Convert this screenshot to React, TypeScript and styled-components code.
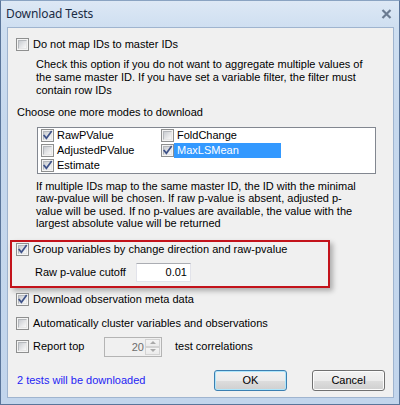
import React from 'react';
import styled, { createGlobalStyle } from 'styled-components';

const GlobalStyle = createGlobalStyle`
  html, body { margin: 0; padding: 0; background: #ffffff; }
  body { font-family: "Liberation Sans", Arial, sans-serif; font-size: 11px; color: #000; }
  * { box-sizing: border-box; }
`;

const Window = styled.div`
  width: 400px;
  height: 405px;
  border: 1px solid #5a759a;
  border-top-color: #8aa3c2;
  background: linear-gradient(to bottom, #dde8f5 0px, #cfdff1 26px, #c6d8ed 120px, #c2d5ec 100%);
  display: flex;
  flex-direction: column;
`;

const TitleBar = styled.div`
  height: 26px;
  flex: none;
  display: flex;
  align-items: center;
  justify-content: space-between;
  padding: 0 7px 1px 5px;
`;

const Title = styled.span`
  font-family: "Noto Sans", "Open Sans", sans-serif;
  font-size: 12px;
  color: #1b2c44;
  letter-spacing: -0.1px;
`;

const Body = styled.div`
  flex: 1;
  display: flex;
  padding: 0 5px 6px 6px;
`;

const Client = styled.div`
  flex: 1;
  background: #f0f0f0;
  border: 1px solid #9fb4cf;
  display: flex;
  flex-direction: column;
  align-items: flex-start;
`;

const Row = styled.div<{ $mt: number; $ml: number; $h?: number }>`
  display: flex;
  align-items: center;
  height: ${p => p.$h ?? 13}px;
  margin-top: ${p => p.$mt}px;
  margin-left: ${p => p.$ml}px;
  white-space: nowrap;
  line-height: 13px;
`;

const Label = styled.span<{ $gap?: number; $w?: number }>`
  margin-left: ${p => p.$gap ?? 4}px;
  ${p => (p.$w ? `width: ${p.$w}px;` : '')}
`;

const BoxOuter = styled.span`
  width: 13px;
  height: 13px;
  flex: none;
  border: 1px solid #8e8f8f;
  background: #f4f4f4;
  padding: 1px;
  display: flex;
`;

const BoxInner = styled.span`
  flex: 1;
  position: relative;
  background: linear-gradient(135deg, #c9ccd1 0%, #e4e5e7 55%, #f9f9f9 100%);
  border: 1px solid #b5b8bc;
  border-right-color: #e6e6e6;
  border-bottom-color: #e6e6e6;
  overflow: visible;
`;

const CheckSvg = styled.svg`
  position: absolute;
  left: -2px;
  top: -2px;
  width: 11px;
  height: 11px;
`;

const Checkbox: React.FC<{ checked?: boolean }> = ({ checked }) => (
  <BoxOuter>
    <BoxInner>
      {checked && (
        <CheckSvg viewBox="0 0 11 11">
          <path d="M2.2 5.6 L4.4 8.3 L9.2 1.8" fill="none" stroke="#3e5289" strokeWidth="1.7" strokeLinecap="square" strokeLinejoin="miter" />
        </CheckSvg>
      )}
    </BoxInner>
  </BoxOuter>
);

const Para = styled.p<{ $mt: number; $ml: number; $lh: number }>`
  margin: ${p => p.$mt}px 0 0 ${p => p.$ml}px;
  line-height: ${p => p.$lh}px;
  white-space: nowrap;
`;

const ListBox = styled.div`
  margin: 8px 0 0 29px;
  width: 339px;
  height: 47px;
  border: 1px solid #828790;
  background: #ffffff;
  padding-left: 3px;
  display: grid;
  grid-template-columns: 120px 120px;
  grid-template-rows: repeat(3, 15px);
  grid-auto-flow: column;
`;

const ListItem = styled.div`
  display: flex;
  align-items: center;
  height: 15px;
`;

const ItemText = styled.span<{ $selected?: boolean }>`
  flex: 1;
  height: 15px;
  line-height: 15px;
  padding-left: 3px;
  white-space: nowrap;
  background: ${p => (p.$selected ? '#3399ff' : 'transparent')};
  color: ${p => (p.$selected ? '#ffffff' : '#000000')};
`;

const GroupBox = styled.div`
  margin: 10px 0 0 2px;
  width: 320px;
  height: 48px;
  border: 2px solid #c3131b;
  box-shadow: 3px 3px 5px rgba(0, 0, 0, 0.28);
  display: flex;
  flex-direction: column;
  align-items: flex-start;
`;

const TextBox = styled.div`
  width: 55px;
  height: 19px;
  background: #ffffff;
  border: 1px solid #e2e3ea;
  border-top-color: #abadb3;
  text-align: right;
  padding-right: 3px;
  line-height: 17px;
`;

const Spinner = styled.div`
  margin-left: 20px;
  width: 58px;
  height: 20px;
  border: 1px solid #b4b4b4;
  background: #f0f0f0;
  display: flex;
  padding: 1px;
`;

const SpinValue = styled.span`
  flex: 1;
  text-align: right;
  color: #6d6d6d;
  line-height: 16px;
  padding-right: 1px;
`;

const SpinButtons = styled.div`
  width: 15px;
  display: flex;
  flex-direction: column;
  gap: 0px;
`;

const SpinButton = styled.div`
  flex: 1;
  border: 1px solid #d3d3d3;
  background: linear-gradient(#f4f4f4, #ebebeb);
  display: flex;
  align-items: center;
  justify-content: center;
`;

const Arrow = styled.span<{ $up?: boolean }>`
  width: 0;
  height: 0;
  border-left: 3px solid transparent;
  border-right: 3px solid transparent;
  ${p => (p.$up ? 'border-bottom: 3px solid #a9a9a9;' : 'border-top: 3px solid #a9a9a9;')}
`;

const Footer = styled.div`
  margin-top: 13px;
  align-self: stretch;
  display: flex;
  align-items: center;
  padding: 0 8px 0 9px;
  gap: 25px;
`;

const Status = styled.span`
  flex: 1;
  color: #2424f4;
  line-height: 13px;
`;

const Button = styled.button<{ $default?: boolean }>`
  width: 73px;
  height: 21px;
  padding: 0;
  font-family: "Liberation Sans", Arial, sans-serif;
  font-size: 11px;
  color: #000;
  border-radius: 3px;
  border: 1px solid ${p => (p.$default ? '#3c7fb1' : '#707070')};
  background: linear-gradient(to bottom, #f2f2f2 0%, #ebebeb 50%, #dddddd 51%, #cfcfcf 100%);
  box-shadow: inset 0 0 0 1px ${p => (p.$default ? '#aee6fb' : '#fcfcfc')};
`;

const CloseIcon = () => (
  <svg width="11" height="10" viewBox="0 0 11 10">
    <path d="M1.5 1 L9.5 9 M9.5 1 L1.5 9" stroke="#6b7b91" strokeWidth="2.2" />
  </svg>
);

export default function App() {
  return (
    <>
      <GlobalStyle />
      <Window>
        <TitleBar>
          <Title>Download Tests</Title>
          <CloseIcon />
        </TitleBar>
        <Body>
          <Client>
            <Row $mt={10} $ml={8}>
              <Checkbox />
              <Label>Do not map IDs to master IDs</Label>
            </Row>
            <Para $mt={7} $ml={28} $lh={13}>
              Check this option if you do not want to aggregate multiple values of
              <br />
              the same master ID. If you have set a variable filter, the filter must
              <br />
              contain row IDs
            </Para>
            <Para $mt={9} $ml={9} $lh={13}>
              Choose one more modes to download
            </Para>
            <ListBox>
              <ListItem><Checkbox checked /><ItemText>RawPValue</ItemText></ListItem>
              <ListItem><Checkbox /><ItemText>AdjustedPValue</ItemText></ListItem>
              <ListItem><Checkbox checked /><ItemText>Estimate</ItemText></ListItem>
              <ListItem><Checkbox /><ItemText>FoldChange</ItemText></ListItem>
              <ListItem><Checkbox checked /><ItemText $selected>MaxLSMean</ItemText></ListItem>
            </ListBox>
            <Para $mt={6} $ml={28} $lh={12.4}>
              If multiple IDs map to the same master ID, the ID with the minimal
              <br />
              raw-pvalue will be chosen. If raw p-value is absent, adjusted p-
              <br />
              value will be used. If no p-values are available, the value with the
              <br />
              largest absolute value will be returned
            </Para>
            <GroupBox>
              <Row $mt={1} $ml={4}>
                <Checkbox checked />
                <Label>Group variables by change direction and raw-pvalue</Label>
              </Row>
              <Row $mt={7} $ml={23} $h={19}>
                <Label $gap={0} $w={101}>Raw p-value cutoff</Label>
                <TextBox>0.01</TextBox>
              </Row>
            </GroupBox>
            <Row $mt={5} $ml={8}>
              <Checkbox checked />
              <Label>Download observation meta data</Label>
            </Row>
            <Row $mt={11} $ml={8}>
              <Checkbox />
              <Label>Automatically cluster variables and observations</Label>
            </Row>
            <Row $mt={7} $ml={8} $h={20}>
              <Checkbox />
              <Label $w={51}>Report top</Label>
              <Spinner>
                <SpinValue>20</SpinValue>
                <SpinButtons>
                  <SpinButton><Arrow $up /></SpinButton>
                  <SpinButton><Arrow /></SpinButton>
                </SpinButtons>
              </Spinner>
              <Label $gap={13}>test correlations</Label>
            </Row>
            <Footer>
              <Status>2 tests will be downloaded</Status>
              <Button $default>OK</Button>
              <Button>Cancel</Button>
            </Footer>
          </Client>
        </Body>
      </Window>
    </>
  );
}
